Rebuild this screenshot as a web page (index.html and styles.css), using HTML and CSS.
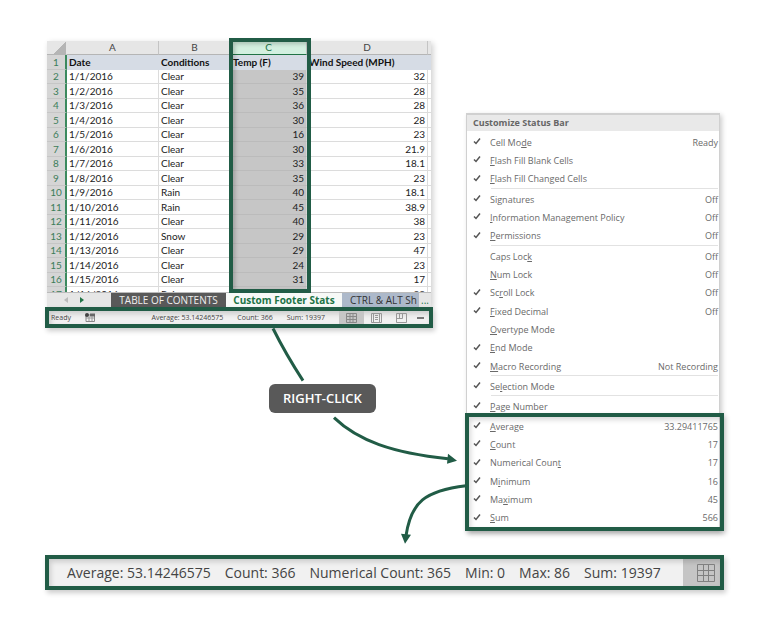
FILE: index.html
```html
<!DOCTYPE html>
<html lang="en">
<head>
    <meta charset="UTF-8">
    <meta name="viewport" content="width=device-width, initial-scale=1.0">
    <title>Custom Footer Stats</title>
    <link rel="stylesheet" href="styles.css">
</head>
<body>
    <main class="figure">
        <div class="top">
            <div class="left">
                <section class="excel">
                    <div class="grid">
                        <table>
                            <colgroup>
                                <col class="col-num"><col class="col-a"><col class="col-b"><col class="col-c"><col><col class="col-end">
                            </colgroup>
                            <thead>
                                <tr><th class="corner"></th><th>A</th><th>B</th><th class="picked">C</th><th>D</th><th></th></tr>
                            </thead>
                            <tbody>
                                <tr class="titles"><th>1</th><td>Date</td><td>Conditions</td><td>Temp (F)</td><td>Wind Speed (MPH)</td><td></td></tr>
                                <tr><th>2</th><td>1/1/2016</td><td>Clear</td><td>39</td><td>32</td><td></td></tr>
                                <tr><th>3</th><td>1/2/2016</td><td>Clear</td><td>35</td><td>28</td><td></td></tr>
                                <tr><th>4</th><td>1/3/2016</td><td>Clear</td><td>36</td><td>28</td><td></td></tr>
                                <tr><th>5</th><td>1/4/2016</td><td>Clear</td><td>30</td><td>28</td><td></td></tr>
                                <tr><th>6</th><td>1/5/2016</td><td>Clear</td><td>16</td><td>23</td><td></td></tr>
                                <tr><th>7</th><td>1/6/2016</td><td>Clear</td><td>30</td><td>21.9</td><td></td></tr>
                                <tr><th>8</th><td>1/7/2016</td><td>Clear</td><td>33</td><td>18.1</td><td></td></tr>
                                <tr><th>9</th><td>1/8/2016</td><td>Clear</td><td>35</td><td>23</td><td></td></tr>
                                <tr><th>10</th><td>1/9/2016</td><td>Rain</td><td>40</td><td>18.1</td><td></td></tr>
                                <tr><th>11</th><td>1/10/2016</td><td>Rain</td><td>45</td><td>38.9</td><td></td></tr>
                                <tr><th>12</th><td>1/11/2016</td><td>Clear</td><td>40</td><td>38</td><td></td></tr>
                                <tr><th>13</th><td>1/12/2016</td><td>Snow</td><td>29</td><td>23</td><td></td></tr>
                                <tr><th>14</th><td>1/13/2016</td><td>Clear</td><td>29</td><td>47</td><td></td></tr>
                                <tr><th>15</th><td>1/14/2016</td><td>Clear</td><td>24</td><td>23</td><td></td></tr>
                                <tr><th>16</th><td>1/15/2016</td><td>Clear</td><td>31</td><td>17</td><td></td></tr>
                                <tr><th>17</th><td>1/16/2016</td><td>Rain</td><td></td><td>28</td><td></td></tr>
                            </tbody>
                        </table>
                    </div>
                    <div class="column-highlight"></div>
                    <nav class="tabs">
                        <button class="scroll off" aria-label="Previous sheet"><svg width="4" height="6" viewBox="0 0 4 6"><path d="M4 0L0 3l4 3z" fill="currentColor"/></svg></button>
                        <button class="scroll" aria-label="Next sheet"><svg width="4" height="6" viewBox="0 0 4 6"><path d="M0 0l4 3-4 3z" fill="currentColor"/></svg></button>
                        <button class="tab dark">TABLE OF CONTENTS</button>
                        <button class="tab active">Custom Footer Stats</button>
                        <button class="tab blue">CTRL &amp; ALT Sh</button>
                        <button class="more">...</button>
                    </nav>
                </section>

                <footer class="status framed">
                    <span class="ready">Ready</span>
                    <svg class="macro" width="10" height="9" viewBox="0 0 10 9">
                        <path d="M1 2h8.500v6.500H1z" fill="#f1f1f1" stroke="#888"/>
                        <path d="M5 .5h5v3H5z" fill="#666"/>
                        <circle cx="2" cy="2" r="2" fill="#444"/>
                        <path d="M1 5h8M4 3v5M7 3v5" stroke="#999"/>
                    </svg>
                    <span class="stat">Average: 53.14246575</span>
                    <span class="stat">Count: 366</span>
                    <span class="stat">Sum: 19397</span>
                    <button class="view on" aria-label="Normal view">
                        <svg width="11" height="10" viewBox="0 0 11 10"><path d="M.5.5h10v9H.5zM.5 3.500h10M.5 6.500h10M4 .5v9M7 .5v9" fill="none" stroke="#888"/></svg>
                    </button>
                    <button class="view" aria-label="Page layout">
                        <svg width="11" height="10" viewBox="0 0 11 10"><path d="M.5.5h10v9H.5zM2.500 1v8M8.500 1v8M4 2.500h3M4 4.500h3M4 6.500h3" fill="none" stroke="#999"/></svg>
                    </button>
                    <button class="view" aria-label="Page break preview">
                        <svg width="11" height="10" viewBox="0 0 11 10"><path d="M.5.5h10v9H.5zM.5 5.500h6V1M3.500 1v4" fill="none" stroke="#999"/></svg>
                    </button>
                    <button class="zoom-out" aria-label="Zoom out"></button>
                </footer>

                <div class="badge">RIGHT-CLICK</div>
            </div>

            <section class="menu">
                <h2>Customize Status Bar</h2>
                <div class="group">
                    <label><input type="checkbox" checked><span>Cell Mo<u>d</u>e</span><b>Ready</b></label>
                    <label><input type="checkbox" checked><span><u>F</u>lash Fill Blank Cells</span></label>
                    <label><input type="checkbox" checked><span><u>F</u>lash Fill Changed Cells</span></label>
                </div>
                <div class="group">
                    <label><input type="checkbox" checked><span>Si<u>g</u>natures</span><b>Off</b></label>
                    <label><input type="checkbox" checked><span><u>I</u>nformation Management Policy</span><b>Off</b></label>
                    <label><input type="checkbox" checked><span><u>P</u>ermissions</span><b>Off</b></label>
                </div>
                <div class="group">
                    <label><input type="checkbox"><span>Caps Loc<u>k</u></span><b>Off</b></label>
                    <label><input type="checkbox"><span><u>N</u>um Lock</span><b>Off</b></label>
                    <label><input type="checkbox" checked><span>Sc<u>r</u>oll Lock</span><b>Off</b></label>
                    <label><input type="checkbox" checked><span><u>F</u>ixed Decimal</span><b>Off</b></label>
                    <label><input type="checkbox"><span><u>O</u>vertype Mode</span></label>
                    <label><input type="checkbox" checked><span><u>E</u>nd Mode</span></label>
                    <label><input type="checkbox" checked><span><u>M</u>acro Recording</span><b>Not Recording</b></label>
                </div>
                <div class="group">
                    <label><input type="checkbox" checked><span>Se<u>l</u>ection Mode</span></label>
                </div>
                <div class="group last">
                    <label><input type="checkbox" checked><span><u>P</u>age Number</span></label>
                </div>
                <div class="stats framed">
                    <label><input type="checkbox" checked><span><u>A</u>verage</span><b>33.29411765</b></label>
                    <label><input type="checkbox" checked><span><u>C</u>ount</span><b>17</b></label>
                    <label><input type="checkbox" checked><span>Numerical Coun<u>t</u></span><b>17</b></label>
                    <label><input type="checkbox" checked><span>M<u>i</u>nimum</span><b>16</b></label>
                    <label><input type="checkbox" checked><span>Ma<u>x</u>imum</span><b>45</b></label>
                    <label><input type="checkbox" checked><span><u>S</u>um</span><b>566</b></label>
                </div>
            </section>
        </div>

        <footer class="result framed">
            <span>Average: 53.14246575</span>
            <span>Count: 366</span>
            <span>Numerical Count: 365</span>
            <span>Min: 0</span>
            <span>Max: 86</span>
            <span>Sum: 19397</span>
            <button aria-label="Normal view">
                <svg width="18" height="18" viewBox="0 0 18 18"><path d="M.5.5h17v17H.5zM.5 6.500h17M.5 11.500h17M6.500.5v17M11.500.5v17" fill="none" stroke="#808080"/></svg>
            </button>
        </footer>

        <svg class="arrows" viewBox="0 0 768 637" preserveAspectRatio="none">
            <g fill="none" stroke="#215c46" stroke-width="3">
                <path d="M273 328Q286 354 303 380"/>
                <path d="M334 417C358 440 392 452 448 458"/>
                <path d="M466 485C425 490 411 501 406 535"/>
            </g>
            <path d="M448 453l9 7-10 3zM401 533l10 1-6 9z" fill="#215c46"/>
        </svg>
    </main>
</body>
</html>
```
FILE: styles.css
```css
* {
    box-sizing: border-box;
}
body {
    margin: 0;
    background: #fff;
    font-family: "Open Sans", "Noto Sans", sans-serif;
    color: #444;
}
button {
    border: 0;
    margin: 0;
    padding: 0;
    background: none;
    font: inherit;
    color: inherit;
}
svg {
    display: block;
}
.figure {
    position: relative;
    padding: 41px 44px 48px 45px;
}
.top {
    display: grid;
    grid-template-columns: minmax(0, 388fr) minmax(0, 259fr);
    column-gap: 32px;
}
.framed {
    border: 4px solid #215c46;
    box-shadow: 2px 3px 5px rgba(0, 0, 0, 0.2), inset 2px 3px 5px rgba(0, 0, 0, 0.15);
}

/* spreadsheet */
.excel {
    position: relative;
    margin: 0 2px;
    box-shadow: 2px 2px 6px rgba(0, 0, 0, 0.2);
}
.grid {
    height: 251px;
    overflow: hidden;
}
table {
    width: 100%;
    table-layout: fixed;
    border-collapse: separate;
    border-spacing: 0;
    font-family: Lato, sans-serif;
    font-size: 10px;
    line-height: 13px;
    color: #222;
}
.col-num { width: 20px; }
.col-a { width: 92px; }
.col-b { width: 72px; }
.col-c { width: 76px; }
.col-end { width: 3px; }
th, td {
    height: 14px;
    padding: 0 2px;
    white-space: nowrap;
    border-right: 1px solid #dcdcdc;
    border-bottom: 1px solid #dcdcdc;
}
tbody tr:nth-child(odd) > * {
    height: 15px;
}
th {
    font-weight: normal;
    background: #e6e6e6;
    color: #444;
}
thead th {
    border-right-color: #c4c4c4;
    border-bottom-color: #b5b5b5;
}
thead th.corner {
    background: linear-gradient(135deg, #e6e6e6 60%, #b5b5b5 60%);
    border-right-color: #e6e6e6;
}
thead th.picked {
    background: #d3f0e0;
    color: #217346;
    border-bottom-color: #217346;
}
tbody th {
    padding: 0;
    background: #d5d5d5;
    color: #3c7d5a;
    border-right: 2px solid #3c8a5e;
    border-bottom-color: #c6c6c6;
}
td:nth-child(4) {
    background: #c6c6c6;
    border-bottom-color: #bbb;
}
td:nth-child(n+4) {
    text-align: right;
}
td:last-child, th:last-child {
    padding: 0;
    border-right: 0;
}
.titles td {
    background: #d6dce5;
    border-color: #d6dce5;
    font-weight: bold;
    text-align: left;
    color: #111;
}
.column-highlight {
    position: absolute;
    top: -3px;
    left: 182px;
    width: 82px;
    height: 255px;
    border: 4px solid #215c46;
    box-shadow: inset 2px 2px 4px rgba(0, 0, 0, 0.2);
}

/* sheet tabs */
.tabs {
    display: flex;
    height: 15px;
    background: #e6e6e6;
    border-top: 1px solid #bbb;
    font-size: 10px;
    line-height: 13px;
}
.scroll {
    width: 17px;
    padding-left: 10px;
    color: #217346;
}
.scroll.off {
    width: 23px;
    padding-left: 17px;
    color: #bbb;
}
.tab {
    white-space: nowrap;
}
.tab.dark {
    width: 115px;
    margin-left: 24px;
    background: #595959;
    color: #eee;
}
.tab.active {
    width: 116px;
    background: #f7f9f7;
    font-weight: bold;
    color: #217346;
}
.tab.blue {
    flex: 1;
    padding-left: 8px;
    background: #adb9ca;
    color: #333;
    text-align: left;
}
.more {
    width: 12px;
    color: #217346;
}

/* small status bar */
.status {
    position: relative;
    display: flex;
    align-items: center;
    height: 21px;
    background: #f1f1f1;
    font-size: 7px;
    line-height: 13px;
    white-space: nowrap;
}
.macro {
    margin: 0 auto 0 14px;
}
.ready {
    margin-left: 2px;
}
.stat {
    margin-right: 14px;
}
.view {
    display: grid;
    place-items: center;
    align-self: stretch;
    width: 25px;
}
.view.on {
    background: #c6c6c6;
}
.zoom-out {
    width: 7px;
    height: 2px;
    margin: 0 5px 0 3px;
    background: #777;
}
.badge {
    width: max-content;
    margin: 56px 0 0 224px;
    padding: 5px 14px 6px;
    border-radius: 6px;
    background: #595959;
    color: #fff;
    font-size: 13px;
    line-height: 18px;
    font-weight: 600;
}

/* context menu */
.menu {
    margin: 72px 4px 0 1px;
    border: 1px solid #d0d0d0;
    border-width: 2px 1px 0;
    box-shadow: 2px 2px 5px rgba(0, 0, 0, 0.2);
    background: #fff;
    font-size: 9px;
    color: #6a6a6a;
}
.menu h2 {
    margin: 0 0 2px;
    padding: 0 6px;
    background: #e9e9e9;
    font-size: 9px;
    line-height: 16px;
    color: #666;
}
.group {
    margin-bottom: 1px;
    padding-right: 1px;
}
.group label {
    padding-left: 6px;
}
.group::after {
    content: "";
    display: block;
    height: 1px;
    margin-left: 24px;
    background: #e2e2e2;
}
.group.last {
    margin: 0;
}
.group.last::after {
    display: none;
}
.menu label {
    display: flex;
    align-items: center;
    height: 18px;
}
.menu label:nth-child(3n) {
    height: 19px;
}
.menu input {
    appearance: none;
    width: 8px;
    height: 8px;
    margin: 0 9px 2px 0;
}
.menu input:checked {
    background: url("data:image/svg+xml,%3Csvg xmlns='http://www.w3.org/2000/svg' viewBox='0 0 8 8'%3E%3Cpath d='M1 4.500l2 2L7 1.500' fill='none' stroke='%23555' stroke-width='1.500'/%3E%3C/svg%3E");
}
.menu b {
    margin-left: auto;
    font-weight: normal;
}
.stats {
    margin: -2px -5px 0 -2px;
    padding: 0 2px 0 4px;
}

/* enlarged status bar */
.result {
    display: flex;
    align-items: center;
    gap: 14px;
    height: 35px;
    margin-top: 24px;
    padding-left: 18px;
    background: #f1f1f1;
    font-size: 14px;
    line-height: 18px;
    white-space: nowrap;
}
.result button {
    display: grid;
    place-items: center;
    align-self: stretch;
    width: 37px;
    margin-left: auto;
    padding-left: 8px;
    background: rgba(0, 0, 0, 0.18);
}

.arrows {
    position: absolute;
    inset: 0;
    width: 100%;
    height: 100%;
    pointer-events: none;
}
```
